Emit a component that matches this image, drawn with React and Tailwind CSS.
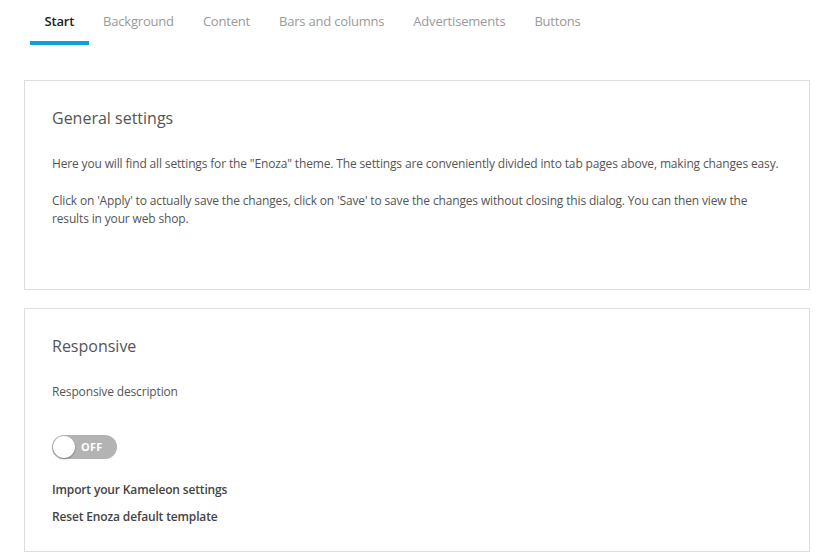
import React, { useState } from 'react';

const tabs = ['Start', 'Background', 'Content', 'Bars and columns', 'Advertisements', 'Buttons'];

function Toggle() {
  const [on, setOn] = useState(false);
  return (
    <button
      type="button"
      onClick={() => setOn(!on)}
      className="relative flex items-center w-[65px] h-[24px] rounded-full bg-[#b3b3b3]"
    >
      <span className="absolute left-[1px] top-[1px] w-[22px] h-[22px] rounded-full bg-white shadow-[0_1px_2px_rgba(0,0,0,0.35)]" />
      <span className="ml-[29px] text-[11px] font-bold text-white tracking-wide">OFF</span>
    </button>
  );
}

export default function App() {
  const [active, setActive] = useState(0);

  return (
    <div className="min-h-screen bg-white font-['Open_Sans',sans-serif] text-[12px] tracking-[-0.15px] text-[#555]">
      {/* Tabs */}
      <div className="flex pl-[30px] h-[45px] text-[13px] tracking-[-0.2px]">
        {tabs.map((tab, idx) => (
          <button
            key={tab}
            type="button"
            onClick={() => setActive(idx)}
            className={
              idx === active
                ? 'px-[14.5px] pt-[12px] border-b-4 border-[#0aa1dd] font-semibold text-[#222] self-stretch flex items-start'
                : 'px-[14.5px] pt-[12px] border-b-4 border-transparent text-[#999] self-stretch flex items-start'
            }
          >
            {tab}
          </button>
        ))}
      </div>

      <div className="pl-[24px] pr-[9px] pt-[35px] flex flex-col gap-[18px]">
        {/* General settings */}
        <section className="border border-[#dedede] h-[210px] px-[27px] pt-[26px]">
          <h2 className="text-[16px] leading-[22px] tracking-normal text-[#555]">General settings</h2>
          <p className="mt-[26px] leading-[18px]">
            Here you will find all settings for the "Enoza" theme. The settings are conveniently divided into tab pages above, making changes easy.
          </p>
          <p className="mt-[19px] leading-[18px]">
            Click on 'Apply' to actually save the changes, click on 'Save' to save the changes without closing this dialog. You can then view the results in your web shop.
          </p>
        </section>

        {/* Responsive */}
        <section className="border border-[#dedede] h-[244px] px-[27px] pt-[26px]">
          <h2 className="text-[16px] leading-[22px] tracking-normal text-[#555]">Responsive</h2>
          <p className="mt-[26px] leading-[18px]">Responsive description</p>
          <div className="mt-[34px]">
            <Toggle />
          </div>
          <div className="mt-[22px] flex flex-col gap-[9px] font-semibold text-[#444]">
            <a href="#import" className="leading-[18px]">Import your Kameleon settings</a>
            <a href="#reset" className="leading-[18px]">Reset Enoza default template</a>
          </div>
        </section>
      </div>
    </div>
  );
}
